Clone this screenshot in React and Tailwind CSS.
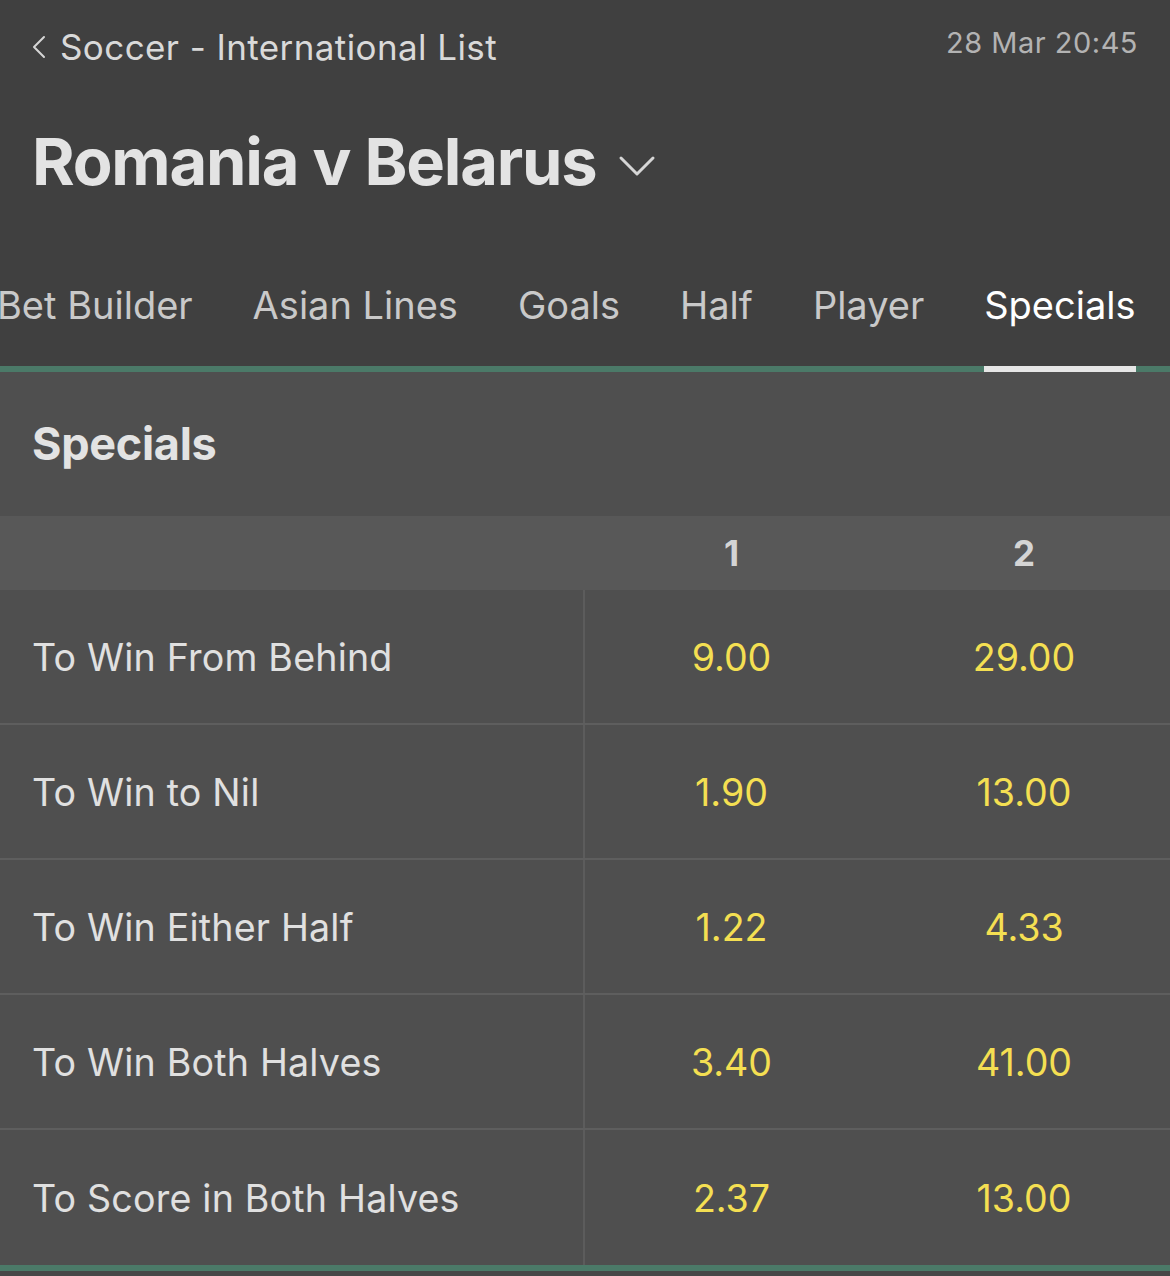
import React from 'react';

const TABS = ['Bet Builder', 'Asian Lines', 'Goals', 'Half', 'Player', 'Specials'];

const ROWS = [
    { label: 'To Win From Behind', odds: ['9.00', '29.00'] },
    { label: 'To Win to Nil', odds: ['1.90', '13.00'] },
    { label: 'To Win Either Half', odds: ['1.22', '4.33'] },
    { label: 'To Win Both Halves', odds: ['3.40', '41.00'] },
    { label: 'To Score in Both Halves', odds: ['2.37', '13.00'] },
];

export default function App() {
    return (
        <div className="w-[1170px] h-[1276px] overflow-hidden bg-[#474747] font-['Inter','Roboto',sans-serif] antialiased">
            <div className="bg-[#404040]">
                <div className="h-[92px] flex justify-between items-start px-8">
                    <div className="flex items-center gap-[14px] pt-[27px]">
                        <svg width="14" height="24" viewBox="0 0 14 24" fill="none">
                            <polyline points="12,2 2,12 12,22" stroke="#d6d6d6" strokeWidth="2" strokeLinecap="round" strokeLinejoin="round" />
                        </svg>
                        <span className="text-[35px] leading-[40px] text-[#d9d9d9] tracking-[0.4px]">Soccer - International List</span>
                    </div>
                    <span className="pt-[25px] text-[29px] leading-[36px] text-[#b3b3b3] tracking-[0.5px]">28 Mar 20:45</span>
                </div>
                <div className="h-[140px] flex items-center px-8 gap-[22px]">
                    <h1 className="text-[65px] leading-[80px] font-bold text-[#e3e3e3] tracking-[-1.2px]">Romania v Belarus</h1>
                    <svg width="38" height="22" viewBox="0 0 38 22" fill="none" className="mt-[8px]">
                        <polyline points="3,3 19,19 35,3" stroke="#d6d6d6" strokeWidth="3" strokeLinecap="round" strokeLinejoin="round" />
                    </svg>
                </div>
                <div className="h-[140px] flex items-end border-b-[6px] border-[#4b7a68] ml-[-3px] gap-[60px]">
                    {TABS.map(tab => (
                        <div
                            key={tab}
                            className={`-mb-[6px] pb-[39px] border-b-[6px] text-[38px] leading-[44px] whitespace-nowrap ${tab === 'Specials' ? 'border-[#e6e6e6] text-white' : 'border-transparent text-[#c9c9c9]'}`}
                        >
                            {tab}
                        </div>
                    ))}
                </div>
            </div>
            <div className="bg-[#4f4f4f]">
                <div className="h-[144px] flex items-center px-8">
                    <h2 className="text-[45px] leading-[50px] font-bold text-[#e3e3e3] tracking-[-0.3px]">Specials</h2>
                </div>
                <div className="h-[74px] bg-[#585858] flex items-center">
                    <div className="w-[585px]" />
                    <div className="w-[293px] text-center text-[35px] font-bold text-[#d4d4d4]">1</div>
                    <div className="flex-1 text-center text-[35px] font-bold text-[#d4d4d4]">2</div>
                </div>
                {ROWS.map((row, i) => (
                    <div
                        key={row.label}
                        className={`flex h-[135px] ${i === ROWS.length - 1 ? 'h-[141px] border-b-[6px] border-[#4b7a68]' : 'border-b-2 border-[#5e5e5e]'}`}
                    >
                        <div className="w-[585px] border-r-2 border-[#5c5c5c] flex items-center px-8 pt-[3px] text-[37.6px] text-[#e0e0e0] tracking-[0.2px]">
                            {row.label}
                        </div>
                        <div className="w-[293px] flex items-center justify-center pt-[3px] text-[37.6px] text-[#f4df52]">{row.odds[0]}</div>
                        <div className="flex-1 flex items-center justify-center pt-[3px] text-[37.6px] text-[#f4df52]">{row.odds[1]}</div>
                    </div>
                ))}
            </div>
        </div>
    );
}
